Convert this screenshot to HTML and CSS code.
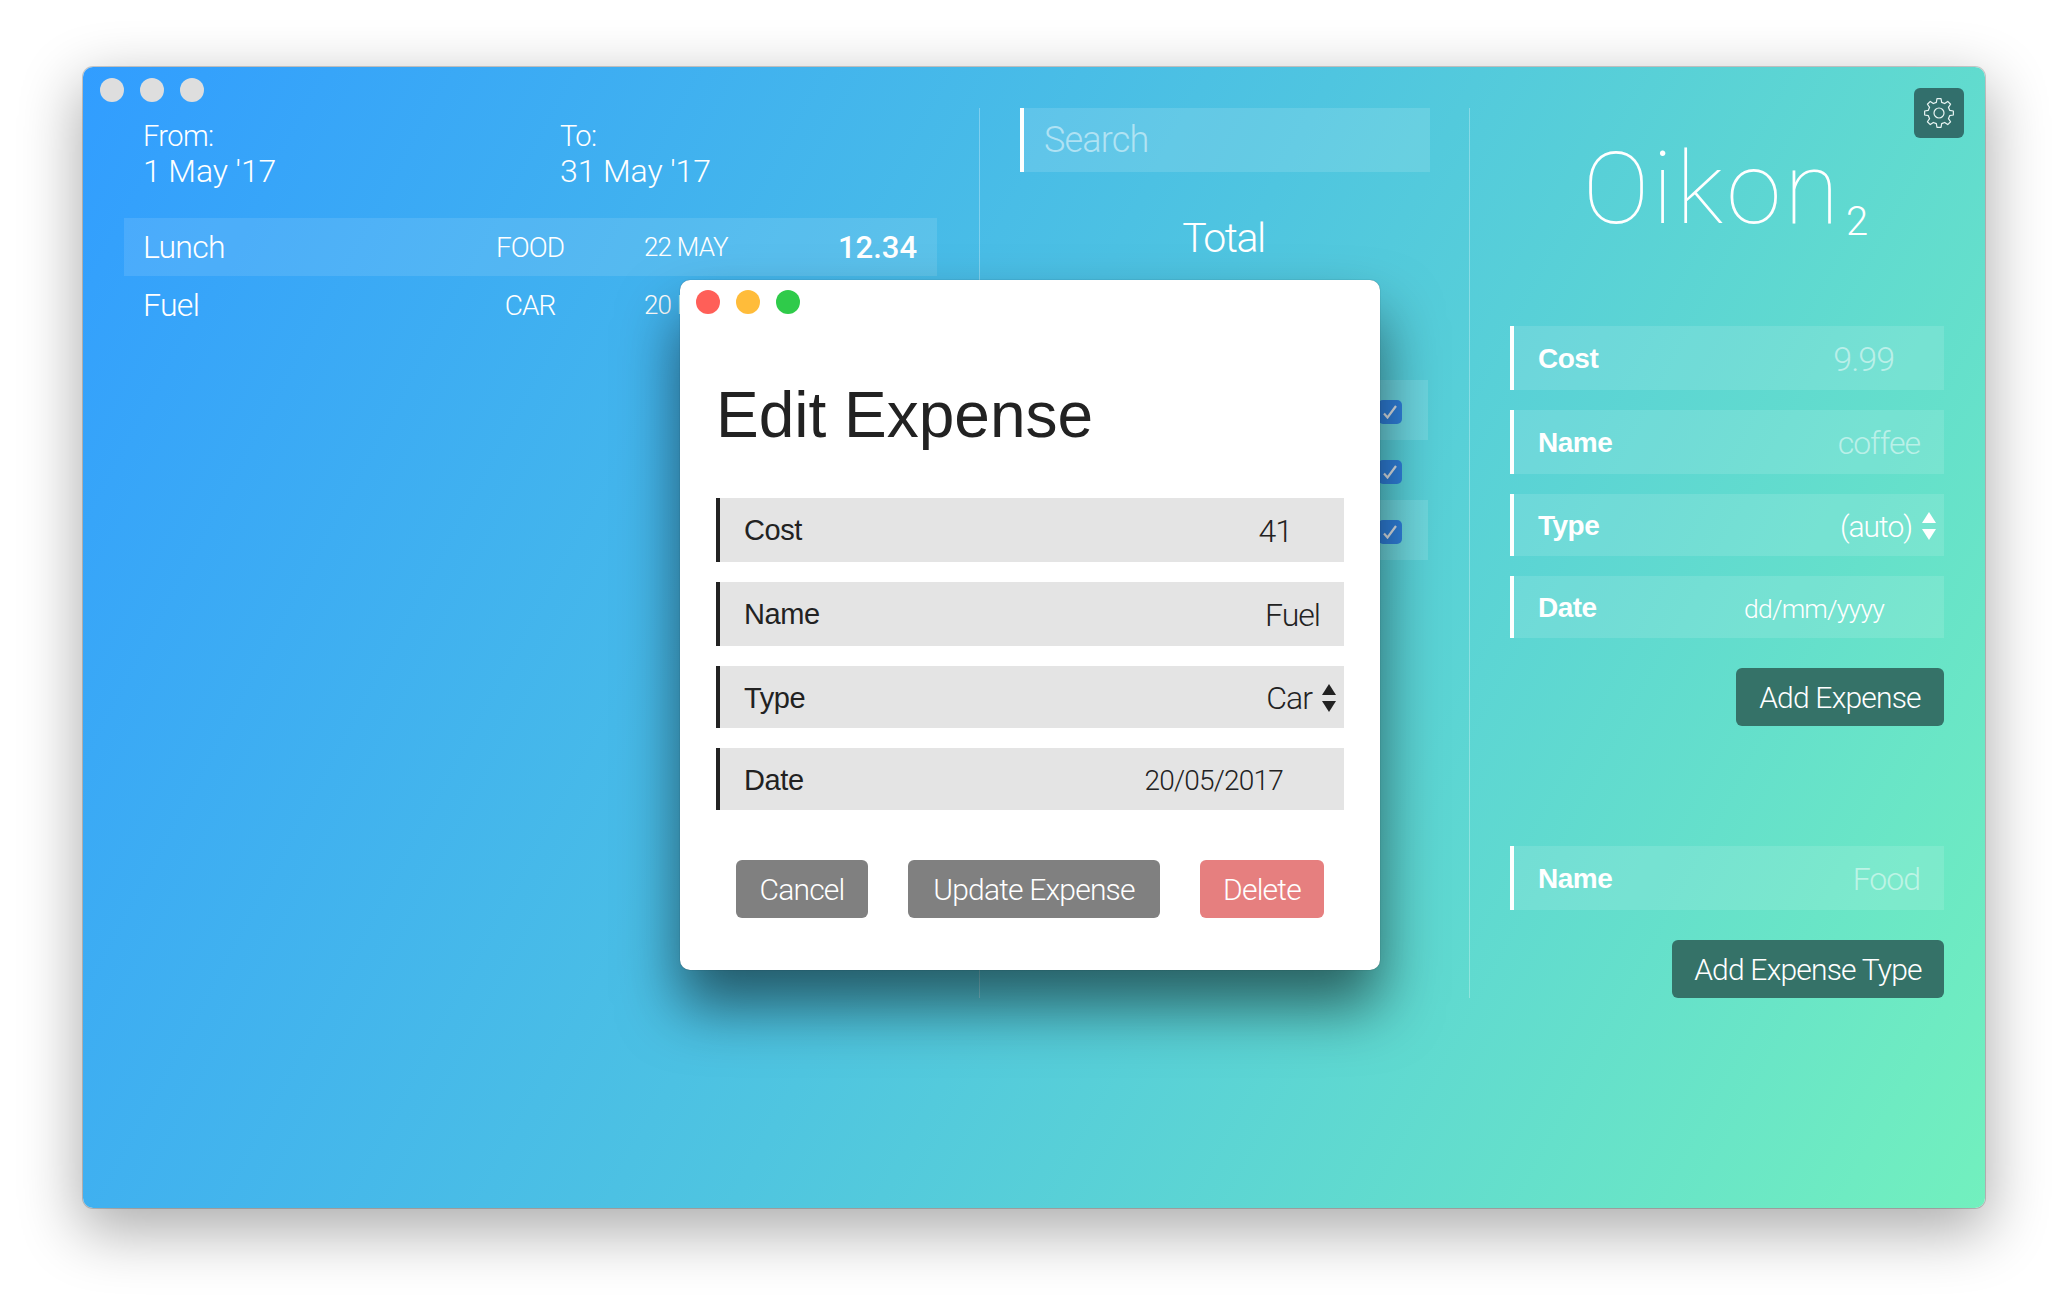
FILE: index.html
```html
<!DOCTYPE html>
<html lang="en">

<head>
    <meta charset="UTF-8">
    <title>Oikon</title>
    <link rel="stylesheet" href="styles.css">
</head>

<body>

    <div class="window">
        <div class="titlebar">
            <span class="dot"></span>
            <span class="dot"></span>
            <span class="dot"></span>
        </div>

        <button class="settings">
            <svg width="30" height="30" viewBox="0 0 30 30" fill="none" stroke="#e8f4f2" stroke-width="1.2" stroke-linejoin="round">
                <path d="M12.34 4.33 12.98 .64H17.02L17.66 4.33 20.67 5.57 23.73 3.42 26.58 6.27 24.43 9.33 25.67 12.34 29.36 12.98V17.02L25.67 17.66 24.43 20.67 26.58 23.73 23.73 26.58 20.67 24.43 17.66 25.67 17.02 29.36H12.98L12.34 25.67 9.33 24.43 6.27 26.58 3.42 23.73 5.57 20.67 4.33 17.66 .64 17.02V12.98L4.33 12.34 5.57 9.33 3.42 6.27 6.27 3.42 9.33 5.57Z" />
                <circle cx="15" cy="15" r="5" />
            </svg>
        </button>

        <div class="main">
            <div class="col col-list">
                <div class="dates">
                    <div class="date-block">From:<span class="date-value">1 May '17</span></div>
                    <div class="date-block">To:<span class="date-value">31 May '17</span></div>
                </div>
                <div class="expense-row selected">
                    <span class="expense-name">Lunch</span>
                    <span class="expense-type">FOOD</span>
                    <span class="expense-date">22 MAY</span>
                    <span class="expense-cost">12.34</span>
                </div>
                <div class="expense-row">
                    <span class="expense-name">Fuel</span>
                    <span class="expense-type">CAR</span>
                    <span class="expense-date">20 MAY</span>
                    <span class="expense-cost">41.00</span>
                </div>
            </div>

            <div class="col col-totals">
                <div class="search">Search</div>
                <div class="total">Total</div>
                <div class="type-list">
                    <div class="type-row shaded"><span class="check"><svg width="14" height="14" viewBox="0 0 14 14" fill="none" stroke="#dde3e8" stroke-width="2.2"><path d="M1 8.5 4.5 12.5 13 1" /></svg></span></div>
                    <div class="type-row"><span class="check"><svg width="14" height="14" viewBox="0 0 14 14" fill="none" stroke="#dde3e8" stroke-width="2.2"><path d="M1 8.5 4.5 12.5 13 1" /></svg></span></div>
                    <div class="type-row shaded"><span class="check"><svg width="14" height="14" viewBox="0 0 14 14" fill="none" stroke="#dde3e8" stroke-width="2.2"><path d="M1 8.5 4.5 12.5 13 1" /></svg></span></div>
                </div>
            </div>

            <div class="col col-add">
                <div class="logo">Oikon<sub>2</sub></div>
                <div class="fields">
                    <div class="field">
                        <span class="field-label">Cost</span>
                        <span class="field-value number hint">9.99</span>
                    </div>
                    <div class="field">
                        <span class="field-label">Name</span>
                        <span class="field-value hint">coffee</span>
                    </div>
                    <div class="field short">
                        <span class="field-label">Type</span>
                        <span class="field-value select">(auto)<span class="arrows"></span></span>
                    </div>
                    <div class="field short">
                        <span class="field-label">Date</span>
                        <span class="field-value date">dd/mm/yyyy</span>
                    </div>
                </div>
                <div class="actions">
                    <button class="button dark add-expense">Add Expense</button>
                </div>
                <div class="fields type-form">
                    <div class="field">
                        <span class="field-label">Name</span>
                        <span class="field-value hint">Food</span>
                    </div>
                </div>
                <div class="actions">
                    <button class="button dark add-type">Add Expense Type</button>
                </div>
            </div>
        </div>

        <div class="modal">
            <div class="titlebar modal-titlebar">
                <span class="dot red"></span>
                <span class="dot yellow"></span>
                <span class="dot green"></span>
            </div>
            <h1>Edit Expense</h1>
            <div class="fields">
                <div class="field">
                    <span class="field-label">Cost</span>
                    <span class="field-value number">41</span>
                </div>
                <div class="field">
                    <span class="field-label">Name</span>
                    <span class="field-value">Fuel</span>
                </div>
                <div class="field short">
                    <span class="field-label">Type</span>
                    <span class="field-value select">Car<span class="arrows"></span></span>
                </div>
                <div class="field short">
                    <span class="field-label">Date</span>
                    <span class="field-value date">20/05/2017</span>
                </div>
            </div>
            <div class="modal-buttons">
                <button class="button grey cancel">Cancel</button>
                <button class="button grey update">Update Expense</button>
                <button class="button danger delete">Delete</button>
            </div>
        </div>
    </div>

</body>

</html>
```

FILE: styles.css
```css
* {
    box-sizing: border-box;
}

body {
    font-family: 'Roboto', 'Liberation Sans', sans-serif;
    font-weight: 300;
    background-color: #fff;
    color: #fff;
    margin: 0;
    padding: 67px 0 100px 83px;
}

.window {
    position: relative;
    width: 1902px;
    height: 1141px;
    border-radius: 10px;
    background: linear-gradient(118deg, #319dff 0%, #4fc5e0 50%, #72f0be 100%);
    box-shadow: 0 0 0 1px rgba(0, 0, 0, 0.18), 0 20px 60px 4px rgba(0, 0, 0, 0.32);
}

.titlebar {
    display: flex;
    gap: 16px;
    height: 41px;
    padding: 11px 0 0 17px;
}

.dot {
    width: 24px;
    height: 24px;
    border-radius: 50%;
    background-color: #dedede;
}

.red {
    background-color: #ff5f58;
}

.yellow {
    background-color: #ffbc3a;
}

.green {
    background-color: #2fcb4a;
}

.settings {
    position: absolute;
    top: 21px;
    right: 21px;
    width: 50px;
    height: 50px;
    padding: 0;
    display: flex;
    align-items: center;
    justify-content: center;
    border: none;
    border-radius: 6px;
    background-color: #326f6c;
}

.main {
    display: flex;
    height: 890px;
}

.col-list {
    width: 897px;
    padding-left: 41px;
    border-right: 1px solid rgba(255, 255, 255, 0.3);
}

.col-totals {
    width: 490px;
    padding: 0 39px 0 40px;
    border-right: 1px solid rgba(255, 255, 255, 0.3);
}

.col-add {
    width: 474px;
    padding-left: 40px;
}

.dates {
    display: flex;
    padding: 10px 0 0 19px;
    margin-bottom: 29px;
}

.date-block {
    width: 417px;
    font-size: 29px;
    line-height: 36px;
    letter-spacing: -0.6px;
}

.date-value {
    display: block;
    margin-top: -1px;
    font-size: 32px;
    letter-spacing: -0.1px;
}

.expense-row {
    display: grid;
    grid-template-columns: 303px 168px 1fr auto;
    align-items: center;
    width: 813px;
    height: 58px;
    padding: 0 20px 0 19px;
}

.selected {
    background-color: rgba(255, 255, 255, 0.11);
}

.expense-name {
    font-size: 32px;
    letter-spacing: -0.7px;
}

.expense-type {
    font-size: 28px;
    letter-spacing: -1px;
    text-align: center;
}

.expense-date {
    font-size: 26px;
    letter-spacing: -0.8px;
    padding-left: 30px;
}

.expense-cost {
    font-size: 31px;
    font-weight: 500;
}

.search {
    height: 64px;
    padding-left: 20px;
    border-left: 4px solid #fff;
    background-color: rgba(255, 255, 255, 0.13);
    color: rgba(255, 255, 255, 0.5);
    font-size: 36px;
    line-height: 64px;
    letter-spacing: -0.8px;
}

.total {
    margin-top: 41px;
    padding-right: 3px;
    font-size: 41px;
    line-height: 50px;
    letter-spacing: -1.5px;
    text-align: center;
}

.type-list {
    margin-top: 117px;
    width: 408px;
}

.type-row {
    display: flex;
    justify-content: flex-end;
    align-items: center;
    height: 60px;
    padding-right: 26px;
}

.shaded {
    background-color: rgba(255, 255, 255, 0.13);
}

.check {
    display: flex;
    align-items: center;
    justify-content: center;
    width: 24px;
    height: 24px;
    margin-top: 3px;
    border-radius: 5px;
    background-color: #2f80dc;
}

.logo {
    margin-top: 21px;
    font-family: 'Roboto', sans-serif;
    font-weight: 100;
    font-size: 100px;
    line-height: 120px;
    letter-spacing: 3px;
    text-align: center;
}

.logo sub {
    font-size: 40px;
    font-weight: 300;
    line-height: 0;
    vertical-align: -12px;
    margin-left: 4px;
}

.fields {
    display: flex;
    flex-direction: column;
    gap: 20px;
}

.col-add .fields {
    width: 434px;
}

.logo + .fields {
    margin-top: 77px;
}

.field {
    display: flex;
    justify-content: space-between;
    align-items: center;
    height: 64px;
    padding: 2px 0 0 24px;
    border-left: 4px solid #fff;
    background-color: rgba(255, 255, 255, 0.12);
}

.field.short {
    height: 62px;
}

.field-label {
    font-family: 'Liberation Sans', sans-serif;
    font-weight: 400;
    font-size: 29px;
    letter-spacing: -0.4px;
}

.col-add .field-label {
    font-weight: 700;
    font-size: 28px;
    letter-spacing: -0.5px;
}

.field-value {
    display: flex;
    align-items: center;
    padding-right: 24px;
    font-size: 32px;
    letter-spacing: -1px;
}

.field-value.number {
    padding-right: 50px;
    font-size: 34px;
}

.field-value.date {
    padding-right: 60px;
    font-size: 26.5px;
    letter-spacing: -0.8px;
}

.field-value.select {
    padding-right: 8px;
    font-size: 30px;
}

.hint {
    color: rgba(255, 255, 255, 0.5);
}

.arrows {
    display: flex;
    flex-direction: column;
    gap: 6px;
    margin-left: 10px;
}

.arrows::before,
.arrows::after {
    content: "";
    width: 0;
    height: 0;
    border-left: 7px solid transparent;
    border-right: 7px solid transparent;
}

.arrows::before {
    border-bottom: 11px solid currentColor;
}

.arrows::after {
    border-top: 11px solid currentColor;
}

.button {
    height: 58px;
    padding: 0;
    border: none;
    border-radius: 6px;
    color: #fff;
    font-family: 'Roboto', 'Liberation Sans', sans-serif;
    font-weight: 300;
    font-size: 30px;
    letter-spacing: -0.8px;
}

.dark {
    background-color: #357268;
}

.grey {
    background-color: #808080;
}

.danger {
    background-color: #e67f7f;
}

.actions {
    display: flex;
    justify-content: flex-end;
    width: 434px;
    margin-top: 30px;
}

.add-expense {
    width: 208px;
}

.add-type {
    width: 272px;
}

.type-form {
    margin-top: 120px;
}

.modal {
    position: absolute;
    left: 597px;
    top: 213px;
    width: 700px;
    height: 690px;
    padding: 0 36px;
    border-radius: 10px;
    background-color: #fff;
    color: #222;
    box-shadow: 0 0 1px rgba(0, 0, 0, 0.5), 0 36px 60px rgba(0, 0, 0, 0.55);
}

.modal-titlebar {
    margin: 0 -36px;
    padding: 10px 0 0 16px;
}

.modal h1 {
    margin: 56px 0 45px;
    font-family: 'Liberation Sans', sans-serif;
    font-weight: 400;
    font-size: 64px;
    line-height: 76px;
}

.modal .field {
    border-left-color: #222;
    background-color: #e4e4e4;
}

.modal .field-label {
    margin-top: -2px;
}

.modal .field.short .field-label {
    margin-top: 0;
}

.modal .field-value.number {
    padding-right: 52px;
    font-size: 32px;
}

.modal .field-value.date {
    padding-right: 61px;
    font-size: 28px;
}

.modal .field-value.select {
    font-size: 32px;
}

.modal-buttons {
    display: flex;
    justify-content: center;
    gap: 40px;
    margin-top: 50px;
}

.cancel {
    width: 132px;
}

.update {
    width: 252px;
}

.delete {
    width: 124px;
}
```
